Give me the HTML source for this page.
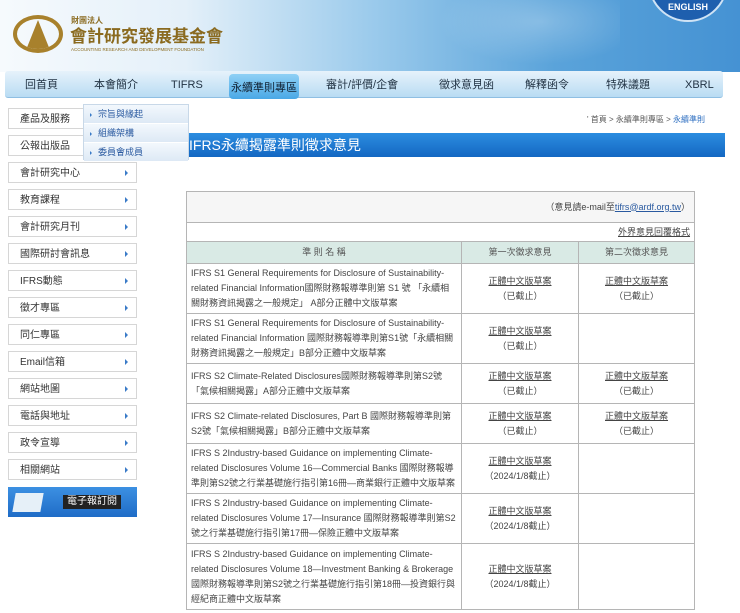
<!DOCTYPE html>
<html><head><meta charset="utf-8">
<style>
*{margin:0;padding:0;box-sizing:border-box}
body{width:740px;height:613px;overflow:hidden;background:#fff;font-family:"Liberation Sans","Noto Sans CJK TC",sans-serif;position:relative}
.hdr{position:absolute;left:0;top:0;width:740px;height:72px;background:linear-gradient(90deg,#f6fafd 0%,#e4f0f9 25%,#9ccbec 50%,#5aa3da 75%,#4592d3 100%)}
.map{position:absolute;left:420px;top:0;width:200px;height:72px;background:radial-gradient(ellipse at 60% 30%,rgba(255,255,255,.25),rgba(255,255,255,0) 60%)}
.eng{position:absolute;left:648px;top:-30px;width:80px;height:52px;border-radius:0 0 40px 40px;background:#1e5fae;border:2px solid #cfe3f5;color:#fff;font-size:9px;line-height:10px;font-weight:bold;text-align:center;padding-top:30px}
.logo{position:absolute;left:13px;top:15px;width:50px;height:38px;border-radius:50%;border:4px solid #a8812c;overflow:hidden}
.logo:after{content:"";position:absolute;left:9px;top:1px;width:0;height:0;border-left:12px solid transparent;border-right:12px solid transparent;border-bottom:30px solid #a8812c}
.lt1{position:absolute;left:71px;top:16px;font-size:8px;line-height:9px;color:#8a6a1f;font-weight:bold}
.lt2{position:absolute;left:70px;top:27px;font-size:17px;line-height:19px;color:#8a6a1f;font-weight:bold}
.lt3{position:absolute;left:71px;top:47px;font-size:4.5px;line-height:5px;color:#8a6a1f;white-space:nowrap}
.nav{position:absolute;left:5px;top:71px;width:718px;height:27px;background:linear-gradient(#e6f2fb,#b9dcf3);border-bottom:1px solid #8fbfe3;border-radius:3px}
.nav span{position:absolute;top:8px;font-size:11px;line-height:12px;color:#234}
.nav .on{top:3px;left:224px;width:70px;height:25px;background:linear-gradient(#8fd0f5,#4aa8e6);border-radius:4px;padding-top:8px;text-align:center;color:#123}
.side{position:absolute;left:8px;width:129px;height:21px;border:1px solid #d6d6d6;background:#fff;font-size:10px;line-height:12px;color:#333;padding:5px 0 0 11px}
.side:after{content:"";position:absolute;right:8px;top:7px;border-left:3px solid #3a7bc8;border-top:3px solid transparent;border-bottom:3px solid transparent}
.dd{position:absolute;left:83px;top:104px;width:106px;height:56px;background:#e8f1fa;border:1px solid #c8d8e8}
.dd div{height:19px;font-size:9px;line-height:11px;color:#2a5aa0;padding:4px 0 0 14px;border-bottom:1px solid #fff;position:relative;background:linear-gradient(#f3f8fd,#dde9f5)}
.dd div:before{content:"";position:absolute;left:6px;top:8px;border-left:2px solid #3a7bc8;border-top:2px solid transparent;border-bottom:2px solid transparent}
.title{position:absolute;left:188px;top:133px;width:537px;height:24px;background:linear-gradient(#2b8de0,#1467c2);color:#fff;font-size:14px;line-height:16px;padding:4px 0 0 1px}
.crumb{position:absolute;left:587px;top:115px;font-size:8px;line-height:9px;color:#555}
.crumb b{color:#2a6cc0;font-weight:normal}
table{position:absolute;left:186px;top:191px;width:508px;border-collapse:collapse;font-size:9px;color:#444;table-layout:fixed}
td{border:1px solid #b5b5b5;vertical-align:middle;line-height:15px}
td.n{padding:0 4px}
td.c{text-align:center}
a{color:#444;text-decoration:underline}
.th td{background:#d9eae5;text-align:center;color:#555}
.news{position:absolute;left:8px;top:487px;width:129px;height:30px;background:linear-gradient(#3c90e2,#1f6cc7);}
.news span{position:absolute;left:55px;top:8px;background:#222;color:#fff;font-size:10px;line-height:12px;padding:1px 4px}
.news i{position:absolute;left:6px;top:6px;width:28px;height:19px;background:#e6f0f8;transform:skew(-10deg)}
</style></head><body>
<div class="hdr"></div><div class="map"></div>
<div class="eng">ENGLISH</div>
<div class="logo"></div>
<div class="lt1">財團法人</div>
<div class="lt2">會計研究發展基金會</div>
<div class="lt3">ACCOUNTING RESEARCH AND DEVELOPMENT FOUNDATION</div>
<div class="nav">
<span style="left:20px">回首頁</span><span style="left:89px">本會簡介</span><span style="left:166px">TIFRS</span>
<span class="on">永續準則專區</span><span style="left:321px">審計/評價/企會</span><span style="left:434px">徵求意見函</span>
<span style="left:520px">解釋函令</span><span style="left:601px">特殊議題</span><span style="left:680px">XBRL</span>
</div>
<div class="side" style="top:108px">產品及服務</div>
<div class="side" style="top:135px">公報出版品</div>
<div class="side" style="top:162px">會計研究中心</div>
<div class="side" style="top:189px">教育課程</div>
<div class="side" style="top:216px">會計研究月刊</div>
<div class="side" style="top:243px">國際研討會訊息</div>
<div class="side" style="top:270px">IFRS動態</div>
<div class="side" style="top:297px">徵才專區</div>
<div class="side" style="top:324px">同仁專區</div>
<div class="side" style="top:351px">Email信箱</div>
<div class="side" style="top:378px">網站地圖</div>
<div class="side" style="top:405px">電話與地址</div>
<div class="side" style="top:432px">政令宣導</div>
<div class="side" style="top:459px">相關網站</div>
<div class="news"><i></i><span>電子報訂閱</span></div>
<div class="crumb">' 首頁 &gt; 永續準則專區 &gt; <b>永續準則</b></div>
<div class="title">IFRS永續揭露準則徵求意見</div>
<div class="dd"><div>宗旨與緣起</div><div>組織架構</div><div>委員會成員</div></div>
<table>
<colgroup><col style="width:275px"><col style="width:117px"><col style="width:116px"></colgroup>
<tr style="height:31px;background:#f6f6f6"><td colspan="3" style="text-align:right;padding-right:4px">（意見請e-mail至<a href="#" style="color:#2a5aa0">tifrs@ardf.org.tw</a>）</td></tr>
<tr style="height:19px"><td colspan="3" style="text-align:right;padding-right:4px"><a href="#">外界意見回覆格式</a></td></tr>
<tr class="th" style="height:22px"><td>準 則 名 稱</td><td>第一次徵求意見</td><td>第二次徵求意見</td></tr>
<tr style="height:50px"><td class="n">IFRS S1 General Requirements for Disclosure of Sustainability-related Financial Information國際財務報導準則第 S1 號 「永續相關財務資訊揭露之一般規定」 A部分正體中文版草案</td><td class="c"><a href="#">正體中文版草案</a><br>（已截止）</td><td class="c"><a href="#">正體中文版草案</a><br>（已截止）</td></tr>
<tr style="height:50px"><td class="n">IFRS S1 General Requirements for Disclosure of Sustainability-related Financial Information 國際財務報導準則第S1號「永續相關財務資訊揭露之一般規定」B部分正體中文版草案</td><td class="c"><a href="#">正體中文版草案</a><br>（已截止）</td><td></td></tr>
<tr style="height:40px"><td class="n">IFRS S2 Climate-Related Disclosures國際財務報導準則第S2號「氣候相關揭露」A部分正體中文版草案</td><td class="c"><a href="#">正體中文版草案</a><br>（已截止）</td><td class="c"><a href="#">正體中文版草案</a><br>（已截止）</td></tr>
<tr style="height:40px"><td class="n">IFRS S2 Climate-related Disclosures, Part B 國際財務報導準則第S2號「氣候相關揭露」B部分正體中文版草案</td><td class="c"><a href="#">正體中文版草案</a><br>（已截止）</td><td class="c"><a href="#">正體中文版草案</a><br>（已截止）</td></tr>
<tr style="height:50px"><td class="n">IFRS S 2Industry-based Guidance on implementing Climate-related Disclosures Volume 16—Commercial Banks 國際財務報導準則第S2號之行業基礎施行指引第16冊—商業銀行正體中文版草案</td><td class="c"><a href="#">正體中文版草案</a><br>（2024/1/8截止）</td><td></td></tr>
<tr style="height:50px"><td class="n">IFRS S 2Industry-based Guidance on implementing Climate-related Disclosures Volume 17—Insurance 國際財務報導準則第S2號之行業基礎施行指引第17冊—保險正體中文版草案</td><td class="c"><a href="#">正體中文版草案</a><br>（2024/1/8截止）</td><td></td></tr>
<tr style="height:66px"><td class="n">IFRS S 2Industry-based Guidance on implementing Climate-related Disclosures Volume 18—Investment Banking &amp; Brokerage 國際財務報導準則第S2號之行業基礎施行指引第18冊—投資銀行與經紀商正體中文版草案</td><td class="c"><a href="#">正體中文版草案</a><br>（2024/1/8截止）</td><td></td></tr>
</table>
</body></html>
